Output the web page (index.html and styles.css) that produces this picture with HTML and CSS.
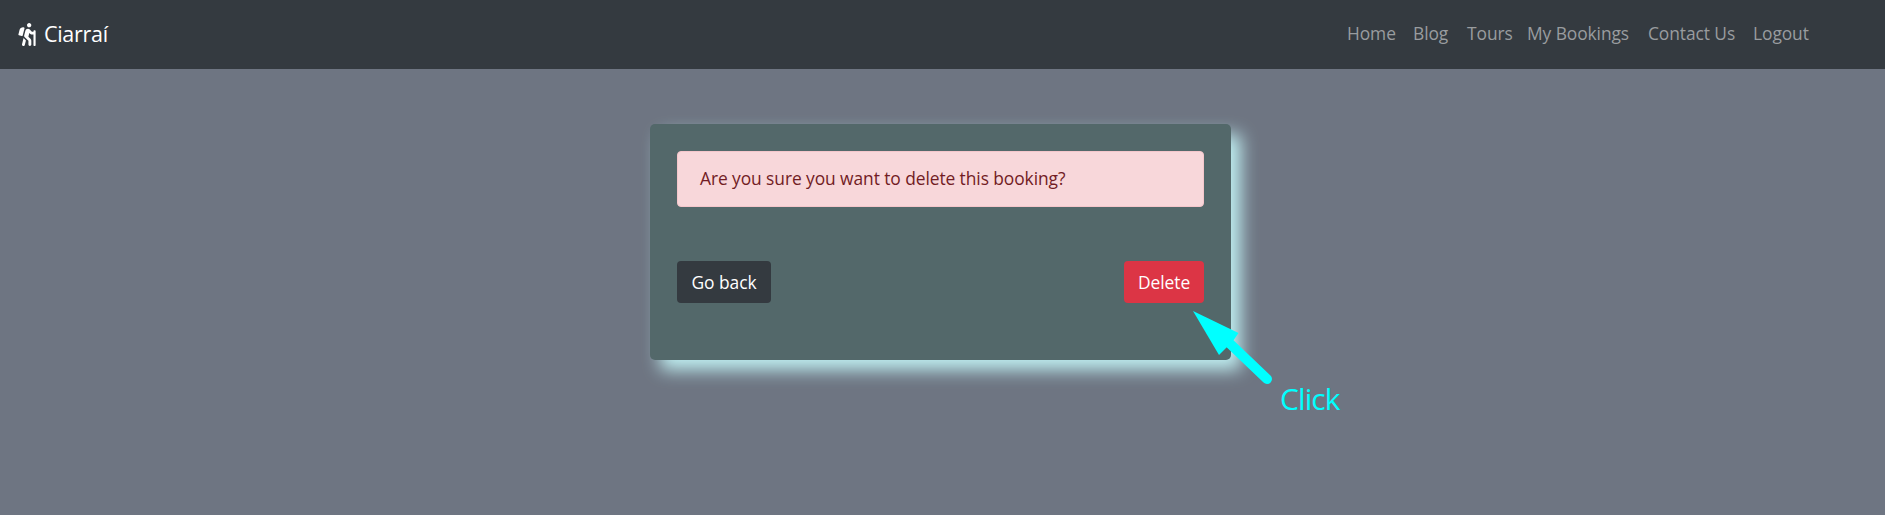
FILE: index.html
```html
<!DOCTYPE html>
<html lang="en">
<head>
<meta charset="utf-8">
<title>Ciarraí</title>
<link rel="stylesheet" href="styles.css">
</head>
<body>
<nav class="navbar">
  <a class="brand">
    <svg class="brand-icon" viewBox="0 0 384 512" fill="currentColor"><path d="M80.95 472.23c-4.28 17.16 6.14 34.53 23.28 38.81 2.61.66 5.22.95 7.8.95 14.33 0 27.37-9.7 31.02-24.23l25.24-100.97-52.78-52.78-34.56 138.22zm14.89-196.12L137 117c2.19-8.42-3.14-16.95-11.92-19.06-43.88-10.52-88.35 15.07-99.32 57.17L.49 253.24c-2.19 8.42 3.14 16.95 11.92 19.06l63.56 15.25c8.79 2.1 17.68-3.02 19.87-11.44zM368 160h-16c-8.84 0-16 7.16-16 16v16h-34.75l-46.78-46.78C243.38 134.11 228.61 128 212.91 128c-27.02 0-50.47 18.3-57.03 44.52l-26.92 107.72a32.012 32.012 0 0 0 8.42 30.39L224 397.25V480c0 17.67 14.33 32 32 32s32-14.33 32-32v-82.75c0-17.09-6.66-33.16-18.75-45.25l-46.82-46.82c.15-.5.49-.89.62-1.41l19.89-79.57 22.43 22.43c6 6 14.14 9.38 22.62 9.38h48v240c0 8.84 7.16 16 16 16h16c8.84 0 16-7.16 16-16V176c.01-8.84-7.15-16-15.99-16zM240 96c26.51 0 48-21.49 48-48S266.51 0 240 0s-48 21.49-48 48 21.49 48 48 48z"/></svg>
    <span class="brand-name">Ciarraí</span>
  </a>
  <div class="links">
    <a>Home</a><a>Blog</a><a>Tours</a><a>My Bookings</a><a>Contact Us</a><a>Logout</a>
  </div>
</nav>
<main class="card">
  <div class="alert">Are you sure you want to delete this booking?</div>
  <div class="actions">
    <button class="btn btn-dark">Go back</button>
    <button class="btn btn-danger">Delete</button>
  </div>
</main>
<div class="callout">
  <svg class="arrow" width="82" height="76" viewBox="0 0 82 76"><path d="M1 1L46.500 23L41 31L27 45Z" fill="#0ff"/><path d="M32 28L75 69" stroke="#0ff" stroke-width="10" stroke-linecap="round"/></svg>
  <span class="callout-text">Click</span>
</div>
</body>
</html>
```
FILE: styles.css
```css
* { box-sizing: border-box; }
body {
  margin: 0;
  height: 515px;
  overflow: hidden;
  background: #6e7582;
  font: 17.4px/27px "Open Sans", "Noto Sans", sans-serif;
}
.navbar {
  display: flex;
  justify-content: space-between;
  align-items: center;
  height: 69px;
  padding: 0 67px 0 18px;
  background: #343a40;
}
.brand {
  display: flex;
  align-items: center;
  gap: 8px;
  color: #fff;
  font-size: 21.5px;
  letter-spacing: -0.3px;
}
.brand-icon { width: 18px; height: 23px; margin-bottom: 1px; }
.brand-name { padding-bottom: 2px; }
.links {
  display: grid;
  grid-template-columns: 66px 54px 60px 121px 105px 65px;
  padding-bottom: 2px;
  color: #999c9f;
  letter-spacing: -0.08px;
  white-space: nowrap;
}
.card {
  width: 581px;
  height: 236px;
  margin: 55px 0 0 650px;
  padding: 27px;
  border-radius: 5px;
  background: #53686a;
  box-shadow: 10px 10px 17px #bfeef1;
}
.alert {
  height: 56px;
  padding: 13px 22px;
  border: 1px solid #f5c6cb;
  border-radius: 4px;
  background: #f8d7da;
  color: #721c24;
  letter-spacing: -0.08px;
  white-space: nowrap;
}
.actions {
  display: flex;
  justify-content: space-between;
  margin-top: 54px;
}
.btn {
  height: 42px;
  padding: 0;
  border: 0;
  border-radius: 4px;
  color: #fff;
  font: inherit;
  letter-spacing: -0.05px;
}
.btn-dark { width: 94px; background: #343a40; }
.btn-danger { width: 80px; background: #dc3545; }
.callout {
  position: absolute;
  left: 1192px;
  top: 310px;
  color: #0ff;
}
.arrow { display: block; }
.callout-text {
  position: absolute;
  left: 88px;
  top: 71px;
  font: 30px/36px "Open Sans", sans-serif;
  letter-spacing: -0.9px;
}
```
